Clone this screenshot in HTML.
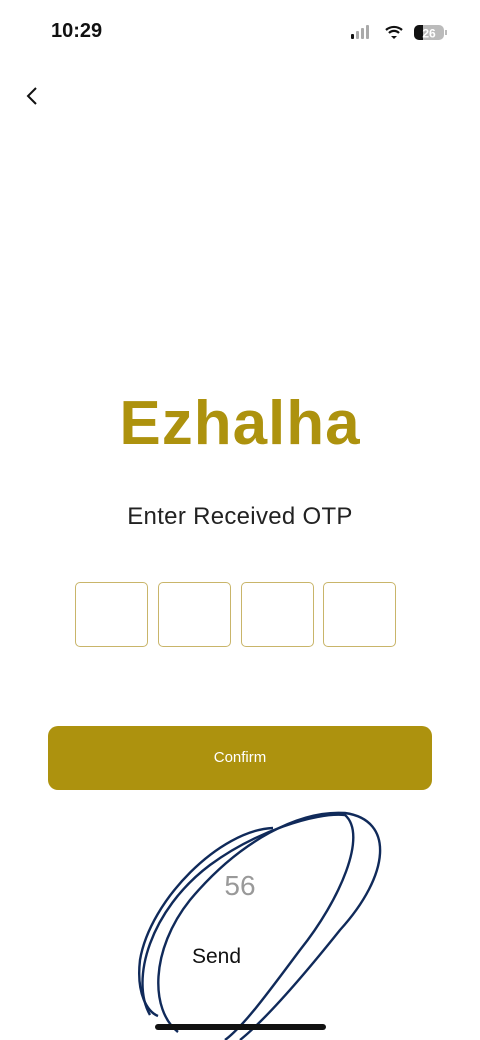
<!DOCTYPE html>
<html><head><style>
body{margin:0;width:480px;height:1040px;background:#fff;font-family:"Liberation Sans",sans-serif;position:relative;overflow:hidden}
.a{position:absolute}
.box{position:absolute;top:582px;width:73px;height:65px;border:1px solid #c9b56a;border-radius:5px;box-sizing:border-box}
</style></head><body>
<div class="a" style="left:51px;top:20px;font-size:20px;font-weight:bold;color:#111">10:29</div>
<svg class="a" style="left:350px;top:24px" width="100" height="18">
<rect x="1" y="10" width="3" height="5" rx="1" fill="#111"/><rect x="6" y="7" width="3" height="8" rx="1" fill="#aaa"/><rect x="11" y="4" width="3" height="11" rx="1" fill="#aaa"/><rect x="16" y="1" width="3" height="14" rx="1" fill="#aaa"/>
<path d="M36 6a12 12 0 0 1 16 0M39 9a7 7 0 0 1 10 0" stroke="#111" stroke-width="2.2" fill="none"/><path d="M41 12l3 3 3-3z" fill="#111"/>
<rect x="64" y="1" width="30" height="15" rx="5" fill="#bbb"/><path d="M69 1h4v15h-4a5 5 0 0 1-5-5v-5a5 5 0 0 1 5-5z" fill="#111"/><rect x="95" y="6" width="2" height="5" fill="#bbb"/>
<text x="79" y="13.5" font-size="12" font-weight="bold" fill="#fff" text-anchor="middle" font-family="Liberation Sans">26</text></svg>
<svg class="a" style="left:24px;top:86px" width="16" height="20"><path d="M12 2L4 10l8 8" stroke="#111" stroke-width="2" fill="none"/></svg>
<div class="a" style="left:0;width:480px;top:388px;text-align:center;font-size:62px;font-weight:bold;color:#ad920e;letter-spacing:1px">Ezhalha</div>
<div class="a" style="left:0;width:480px;top:503px;text-align:center;font-size:24px;color:#222;letter-spacing:0.3px">Enter Received OTP</div>
<div class="box" style="left:75px"></div><div class="box" style="left:158px"></div><div class="box" style="left:241px"></div><div class="box" style="left:323px"></div>
<div class="a" style="left:48px;top:726px;width:384px;height:64px;background:#ad920e;border-radius:10px;color:#fff;font-size:15px;text-align:center;line-height:64px">Confirm</div>
<div class="a" style="left:0;width:480px;top:870px;text-align:center;font-size:28px;color:#999">56</div>
<div class="a" style="left:192px;top:945px;font-size:21px;color:#111">Send</div>
<svg class="a" style="left:0;top:800px" width="480" height="240" fill="none" stroke="#102a5a" stroke-width="2.4">
<path d="M273,28 C220,30 150,100 140,160 C136,195 148,212 158,216"/>
<path d="M150,215 C130,180 150,110 210,65 C255,32 315,12 345,15 C368,35 340,100 300,150 C270,190 245,225 225,240"/>
<path d="M178,232 C150,210 150,150 190,100 C240,40 300,10 345,13 C395,20 390,75 340,130 C300,180 265,220 240,240"/>
</svg>
<div class="a" style="left:155px;top:1024px;width:171px;height:6px;background:#111;border-radius:3px"></div>
</body></html>
